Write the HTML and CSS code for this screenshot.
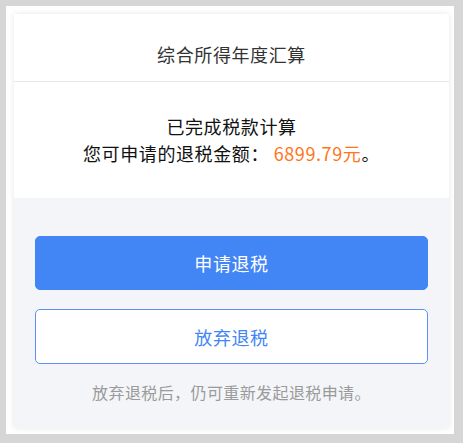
FILE: index.html
```html
<!DOCTYPE html>
<html lang="zh-CN">
<head>
<meta charset="utf-8">
<link rel="stylesheet" href="styles.css">
</head>
<body>
<div class="frame">
  <div class="card">
    <div class="header">综合所得年度汇算</div>
    <div class="result">
      <p class="line">已完成税款计算</p>
      <p class="line">您可申请的退税金额： <span class="amount">6899.79元</span>。</p>
    </div>
    <div class="actions">
      <div class="btn btn-primary">申请退税</div>
      <div class="btn btn-outline">放弃退税</div>
      <p class="note">放弃退税后，仍可重新发起退税申请。</p>
    </div>
  </div>
</div>
</body>
</html>
```

FILE: styles.css
```css
* { box-sizing: border-box; }
html, body { margin: 0; padding: 0; }
body {
  background: #d6d6d6;
  padding: 6px 9px 9px 6px;
  font-family: "Noto Sans CJK SC", "Noto Sans", sans-serif;
}
.frame {
  background: #ffffff;
  width: 448px;
  height: 428px;
  padding: 8px 5px 6px 8px;
}
.card {
  background: #ffffff;
  height: 414px;
  box-shadow: 0 0 6px rgba(0, 0, 0, 0.10);
  display: flex;
  flex-direction: column;
}
.header {
  height: 67.5px;
  padding-top: 27px;
  border-bottom: 1.5px solid #e6e8ef;
  text-align: center;
  font-size: 18px;
  line-height: 27px;
  letter-spacing: 0.6px;
  color: #333333;
}
.result {
  height: 116.5px;
  display: flex;
  flex-direction: column;
  justify-content: center;
  align-items: center;
}
.line {
  margin: 0;
  font-size: 18px;
  line-height: 27px;
  letter-spacing: 0.6px;
  color: #111111;
}
.amount { color: #ff761a; }
.actions {
  flex: 1;
  background: #f4f5f9;
  padding: 38px 21px 0 21px;
  display: flex;
  flex-direction: column;
}
.btn {
  display: flex;
  align-items: center;
  justify-content: center;
  font-size: 18px;
  letter-spacing: 0.6px;
  border-radius: 5px;
  cursor: pointer;
}
.btn-primary {
  height: 54px;
  background: #4286f5;
  border: 1px solid #4286f5;
  color: #ffffff;
}
.btn-outline {
  margin-top: 19px;
  height: 55px;
  background: #ffffff;
  border: 1.2px solid #5a93f5;
  color: #4286f5;
}
.note {
  margin: 16px 0 0 0;
  text-align: center;
  font-size: 16px;
  line-height: 24px;
  letter-spacing: 0.4px;
  color: #9a9a9a;
}
```
